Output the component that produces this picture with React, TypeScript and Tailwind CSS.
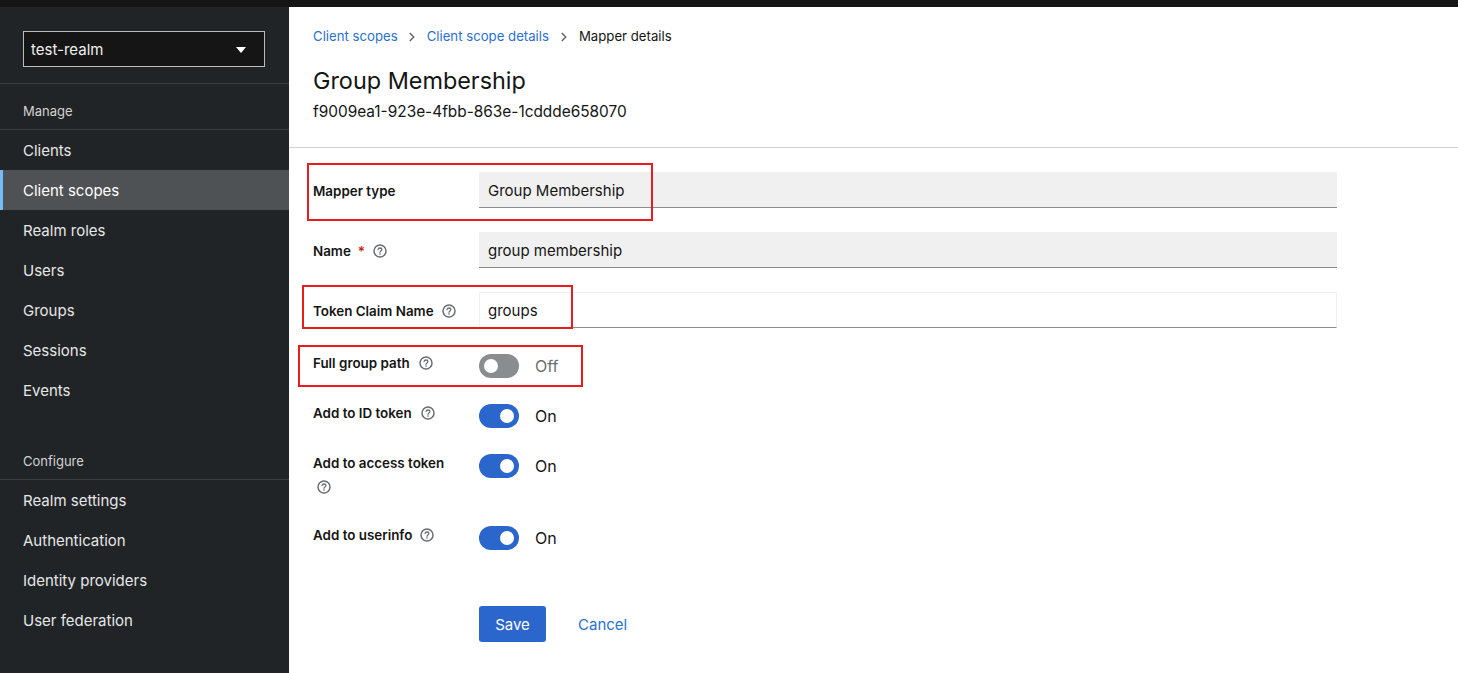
import { ReactNode } from 'react';
import { ChevronRight } from 'lucide-react';

const manageItems = ['Clients', 'Client scopes', 'Realm roles', 'Users', 'Groups', 'Sessions', 'Events'];
const configureItems = ['Realm settings', 'Authentication', 'Identity providers', 'User federation'];

function NavItem({ label }: { label: string }) {
  const active = label === 'Client scopes';
  return (
    <div
      className={`flex h-10 items-center pt-[2px] text-[15px] ${
        active ? 'border-l-[3px] border-[#73bcf7] bg-[#4f5255] pl-5 text-white' : 'pl-[23px] text-[#e6e6e6]'
      }`}
    >
      {label}
    </div>
  );
}

function Sidebar() {
  return (
    <aside className="w-[289px] shrink-0 bg-[#212427]">
      <div className="border-b border-[#3c3f42] px-[23px] pt-6 pb-4">
        <div className="flex h-9 w-[242px] items-center justify-between border border-[#b8bbbe] bg-[#151515] pt-[2px] pr-[18px] pl-[7px] text-[15px] text-[#f0f0f0]">
          test-realm
          <span className="h-0 w-0 border-x-[5.5px] border-t-[6px] border-x-transparent border-t-white" />
        </div>
      </div>
      <div className="flex h-[46px] items-end border-b border-[#3c3f42] pb-2 pl-[23px] text-[13px] leading-[20px] text-[#d2d2d2]">
        Manage
      </div>
      {manageItems.map((item) => (
        <NavItem key={item} label={item} />
      ))}
      <div className="mt-6 flex h-[46px] items-end border-b border-[#3c3f42] pb-2 pl-[23px] text-[13px] leading-[20px] text-[#d2d2d2]">
        Configure
      </div>
      {configureItems.map((item) => (
        <NavItem key={item} label={item} />
      ))}
    </aside>
  );
}

function Help({ className = '' }: { className?: string }) {
  return (
    <svg viewBox="0 0 14 14" className={`h-[14px] w-[14px] shrink-0 ${className}`} fill="none">
      <circle cx="7" cy="7" r="6" stroke="#6a6e73" strokeWidth="1.5" />
      <path
        d="M5.1 5.5C5.2 4.5 6 4 7 4c1.1 0 1.9.6 1.9 1.5 0 1.5-1.9 1.4-1.9 2.8"
        stroke="#6a6e73"
        strokeWidth="1.3"
        strokeLinecap="round"
      />
      <circle cx="7" cy="10.1" r=".8" fill="#6a6e73" />
    </svg>
  );
}

function FieldLabel({ children, className = '' }: { children: ReactNode; className?: string }) {
  return (
    <div className={`self-start text-[13.4px] leading-[20px] font-semibold text-[#151515] ${className}`}>{children}</div>
  );
}

function TextField({ value, readOnly }: { value: string; readOnly?: boolean }) {
  return (
    <div
      className={`flex h-9 w-[858px] items-center border-b border-[#8a8d90] pt-[3px] pl-[9px] text-[15px] text-[#151515] ${
        readOnly ? 'bg-[#f0f0f0]' : 'border-x border-t border-x-[#f0f0f0] border-t-[#f0f0f0] bg-white !pt-[2px] !pl-2'
      }`}
    >
      {value}
    </div>
  );
}

function Toggle({ on }: { on: boolean }) {
  return (
    <div className="flex h-6 items-center">
      <div
        className={`flex h-6 w-10 items-center rounded-full px-[5px] ${
          on ? 'justify-end bg-[#2b66cc]' : 'justify-start bg-[#8a8d90]'
        }`}
      >
        <span className="h-[14px] w-[14px] rounded-full bg-white" />
      </div>
      <span className={`ml-4 text-[16px] ${on ? 'text-[#151515]' : 'text-[#6a6e73]'}`}>{on ? 'On' : 'Off'}</span>
    </div>
  );
}

function Row({ label, children, className = '' }: { label: ReactNode; children: ReactNode; className?: string }) {
  return (
    <div className={`grid grid-cols-[166px_1fr] ${className}`}>
      {label}
      <div>{children}</div>
    </div>
  );
}

function Annotation({ className }: { className: string }) {
  return <div className={`pointer-events-none absolute border-2 border-[#e81c1c] ${className}`} />;
}

export default function App() {
  return (
    <div className="flex h-[673px] w-[1458px] flex-col overflow-hidden bg-white font-['Inter',sans-serif]">
      <div className="h-[7px] shrink-0 bg-[#151515]" />
      <div className="relative flex flex-1">
        <Sidebar />
        <main className="flex-1">
          <nav className="flex h-[58px] items-center pt-[1px] pl-6 text-[13.2px]">
            <span className="text-[#2b6fd1]">Client scopes</span>
            <ChevronRight className="mx-[7.5px] h-[14px] w-[14px] text-[#6a6e73]" strokeWidth={3} />
            <span className="text-[#2b6fd1]">Client scope details</span>
            <ChevronRight className="mx-2 h-[14px] w-[14px] text-[#6a6e73]" strokeWidth={3} />
            <span className="text-[#151515]">Mapper details</span>
          </nav>
          <div className="h-[83px] border-b border-[#d2d2d2] pl-6">
            <h1 className="text-[23.4px] leading-[32px] text-[#151515]">Group Membership</h1>
            <p className="mt-[3px] text-[15.4px] leading-[24px] text-[#151515]">f9009ea1-923e-4fbb-863e-1cddde658070</p>
          </div>
          <form className="flex flex-col pt-6 pl-6">
            <Row label={<FieldLabel className="pt-[9px]">Mapper type</FieldLabel>}>
              <TextField value="Group Membership" readOnly />
            </Row>
            <Row
              className="mt-6"
              label={
                <FieldLabel className="flex items-center gap-[7px] pt-[9px]">
                  <span>Name</span>
                  <span className="text-[#c9190b]">*</span>
                  <Help className="ml-[1px]" />
                </FieldLabel>
              }
            >
              <TextField value="group membership" readOnly />
            </Row>
            <Row
              className="mt-6"
              label={
                <FieldLabel className="flex items-center gap-2 pt-[9px]">
                  <span>Token Claim Name</span>
                  <Help />
                </FieldLabel>
              }
            >
              <TextField value="groups" />
            </Row>
            <Row
              className="mt-[26px]"
              label={
                <FieldLabel className="-mt-px flex items-center gap-[9px]">
                  <span>Full group path</span>
                  <Help />
                </FieldLabel>
              }
            >
              <Toggle on={false} />
            </Row>
            <Row
              className="mt-[26px]"
              label={
                <FieldLabel className="-mt-px flex items-center gap-[9px]">
                  <span>Add to ID token</span>
                  <Help />
                </FieldLabel>
              }
            >
              <Toggle on />
            </Row>
            <Row
              className="mt-[26px]"
              label={
                <FieldLabel className="-mt-px mb-[6px]">
                  <div>Add to access token</div>
                  <Help className="mt-[7px] ml-[4px]" />
                </FieldLabel>
              }
            >
              <Toggle on />
            </Row>
            <Row
              className="mt-[26px]"
              label={
                <FieldLabel className="-mt-px flex items-center gap-2">
                  <span>Add to userinfo</span>
                  <Help />
                </FieldLabel>
              }
            >
              <Toggle on />
            </Row>
            <Row className="mt-14" label={<div />}>
              <div className="flex items-center">
                <button type="button" className="h-9 w-[67px] rounded-[3px] bg-[#2b66cc] pt-[2px] text-[15px] text-white">
                  Save
                </button>
                <button type="button" className="ml-8 pt-[2px] text-[15px] text-[#2b6fd1]">
                  Cancel
                </button>
              </div>
            </Row>
          </form>
        </main>
        {/* highlight boxes drawn over the screenshot */}
        <Annotation className="top-[156px] left-[307px] h-[58px] w-[346px]" />
        <Annotation className="top-[278px] left-[302px] h-[44px] w-[271px]" />
        <Annotation className="top-[338px] left-[298px] h-[42px] w-[285px]" />
      </div>
    </div>
  );
}
